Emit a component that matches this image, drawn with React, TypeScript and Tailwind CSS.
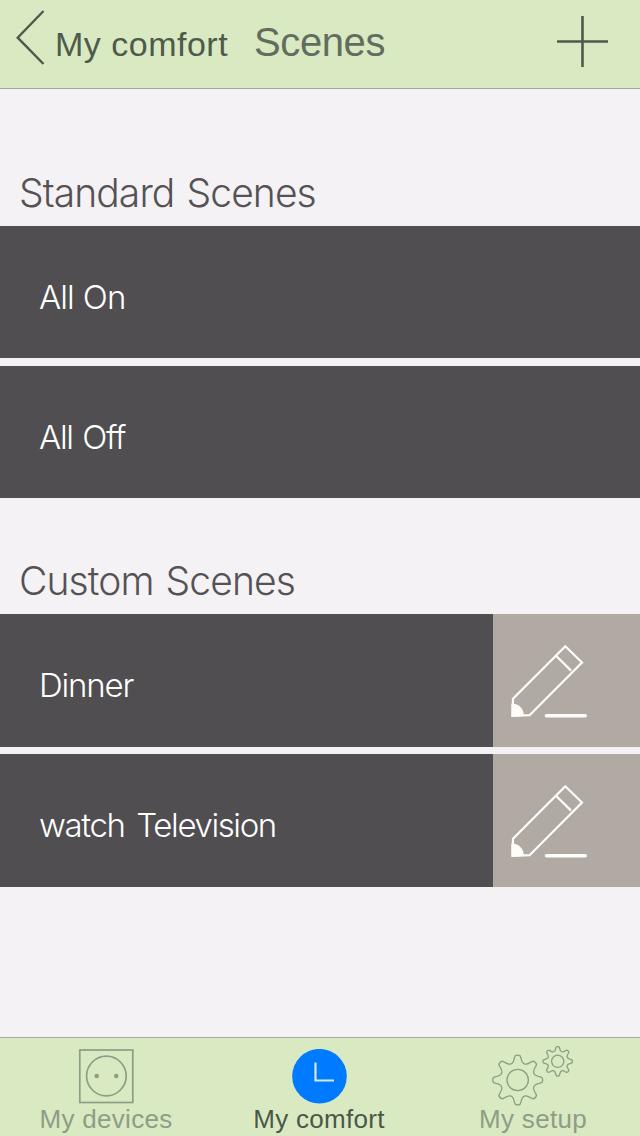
import type { ReactNode } from "react";

interface Scene {
  name: string;
  tracking: string;
  editable?: boolean;
}

const standardScenes: Scene[] = [
  { name: "All On", tracking: "tracking-[-0.9px] [word-spacing:0.5px]" },
  { name: "All Off", tracking: "tracking-[-1.3px] [word-spacing:1.5px]" },
];

const customScenes: Scene[] = [
  { name: "Dinner", tracking: "tracking-[-1.2px]", editable: true },
  { name: "watch Television", tracking: "tracking-[-1.4px] [word-spacing:4px]", editable: true },
];

function gearPath(cx: number, cy: number, r: number) {
  const point = (deg: number, radius: number) => {
    const a = (deg * Math.PI) / 180;
    return `${(cx + radius * Math.cos(a)).toFixed(2)} ${(cy + radius * Math.sin(a)).toFixed(2)}`;
  };
  let d = "";
  for (let i = 0; i < 8; i++) {
    const a = i * 45;
    d += `${i === 0 ? "M" : "L"}${point(a - 9, r * 0.87)}`;
    d += `L${point(a - 6, r * 0.97)}Q${point(a, r * 1.03)} ${point(a + 6, r * 0.97)}`;
    d += `L${point(a + 9, r * 0.87)}Q${point(a + 22.5, r * 0.55)} ${point(a + 36, r * 0.87)}`;
  }
  return d + "Z";
}

function PencilIcon() {
  return (
    <svg width="80" height="76" viewBox="0 0 80 76" fill="none" stroke="#fffdfa" strokeWidth="2.2">
      <path d="M55.3 2.3 72 18.5 19.6 71.2 2.6 71.9 3 54.8Z" />
      <path d="M46.5 12.2 61 26.6" />
      <path d="M1.4 59.6C8.7 59.4 13.8 64.4 13.8 72L1.4 72.8Z" fill="#fffdfa" stroke="none" />
      <path d="M36.5 71.8H75.2" strokeWidth="3.6" strokeLinecap="round" />
    </svg>
  );
}

function SocketIcon() {
  return (
    <svg width="56" height="56" viewBox="0 0 56 56" fill="none" stroke="#8d9d87" strokeWidth="1.7">
      <rect x="1.8" y="1" width="53" height="52.5" />
      <circle cx="28.4" cy="27" r="19.8" />
      <circle cx="18.7" cy="27" r="2.3" fill="#8d9d87" stroke="none" />
      <circle cx="38.2" cy="27" r="2.3" fill="#8d9d87" stroke="none" />
    </svg>
  );
}

function ClockIcon() {
  return (
    <svg width="56" height="56" viewBox="0 0 56 56" fill="none">
      <circle cx="28.5" cy="27.2" r="27.3" fill="#007aff" />
      <path d="M24.5 13.5V31.5H43" stroke="#d2e9dc" strokeWidth="2.2" />
    </svg>
  );
}

function GearsIcon() {
  return (
    <svg width="84" height="60" viewBox="0 0 84 60" fill="none" stroke="#8d9d87" strokeWidth="1.3" strokeLinejoin="round">
      <path d={gearPath(26.7, 34, 25)} />
      <circle cx="26.7" cy="34" r="10.7" />
      <path d={gearPath(66.7, 15.3, 14.8)} />
      <circle cx="66.7" cy="15.3" r="6.1" />
    </svg>
  );
}

function SceneRow({ scene }: { scene: Scene }) {
  return (
    <li className={`flex text-white ${scene.editable ? "h-[133px]" : "h-[132px]"}`}>
      <button className="flex flex-1 items-start bg-[#504e50] pt-[51px] pl-[39px] text-left">
        <span className={`text-[33px] leading-10 font-light whitespace-nowrap ${scene.tracking}`}>
          {scene.name}
        </span>
      </button>
      {scene.editable && (
        <button aria-label={`Edit ${scene.name}`} className="flex w-[147px] bg-[#b1aaa2] pt-[30px] pl-[17px]">
          <PencilIcon />
        </button>
      )}
    </li>
  );
}

function Tab({ label, active, width, children }: { label: string; active?: boolean; width: string; children: ReactNode }) {
  return (
    <button className={`flex flex-col items-center ${width}`}>
      <span className="flex h-[55px] shrink-0 items-start justify-center">{children}</span>
      <span
        className={`text-[26px] leading-[30px] tracking-[0.3px] whitespace-nowrap ${
          active ? "text-[#4b5748]" : "text-[#8d9d87]"
        }`}
      >
        {label}
      </span>
    </button>
  );
}

export default function App() {
  return (
    <div className="flex h-[1136px] w-[640px] flex-col overflow-hidden bg-[#f4f2f5] font-['Inter',sans-serif] text-[#545254]">
      <header className="flex h-[89px] shrink-0 border-b border-[#a2a69c] bg-[#d9eac2] font-['Liberation_Sans',sans-serif]">
        <button className="flex w-[254px] text-[#4e5a4b]">
          <svg className="mt-2 ml-3.5 shrink-0" width="32" height="60" viewBox="0 0 32 60" fill="none" stroke="currentColor" strokeWidth="2.4">
            <path d="M29.5 3 3.7 29.7 29.5 56" />
          </svg>
          <span className="mt-6 ml-[9px] text-[34px] leading-10 tracking-[0.5px] whitespace-nowrap">My comfort</span>
        </button>
        <h1 className="mt-[19px] text-[40px] leading-[46px] tracking-[-0.4px] text-[#626d5f]">Scenes</h1>
        <button aria-label="Add scene" className="mt-[15px] mr-[31px] ml-auto h-[53px] w-[53px] text-[#4e5a4b]">
          <svg width="53" height="53" viewBox="0 0 53 53" stroke="currentColor" strokeWidth="2.6">
            <path d="M1 26.5H52M26.5 1V52" />
          </svg>
        </button>
      </header>

      <main className="flex-1">
        <section>
          <h2 className="flex h-[137px] items-end pb-2 pl-[19px] text-[39px] leading-[50px] font-light tracking-[-0.9px] [word-spacing:2px]">
            Standard Scenes
          </h2>
          <ul className="flex flex-col gap-2">
            {standardScenes.map((scene) => (
              <SceneRow key={scene.name} scene={scene} />
            ))}
          </ul>
        </section>
        <section>
          <h2 className="flex h-[116px] items-end pb-2 pl-[19px] text-[39px] leading-[50px] font-light tracking-[-0.9px] [word-spacing:2px]">
            Custom Scenes
          </h2>
          <ul className="flex flex-col gap-[7px]">
            {customScenes.map((scene) => (
              <SceneRow key={scene.name} scene={scene} />
            ))}
          </ul>
        </section>
      </main>

      <nav className="flex h-[99px] shrink-0 border-t border-[#a0aca3] bg-[#d9eac2] pt-[11px] font-['Liberation_Sans',sans-serif]">
        <Tab label="My devices" width="w-[212px]">
          <SocketIcon />
        </Tab>
        <Tab label="My comfort" width="w-[214px]" active>
          <ClockIcon />
        </Tab>
        <Tab label="My setup" width="w-[214px]">
          <span className="-mt-[3px]">
            <GearsIcon />
          </span>
        </Tab>
      </nav>
    </div>
  );
}
